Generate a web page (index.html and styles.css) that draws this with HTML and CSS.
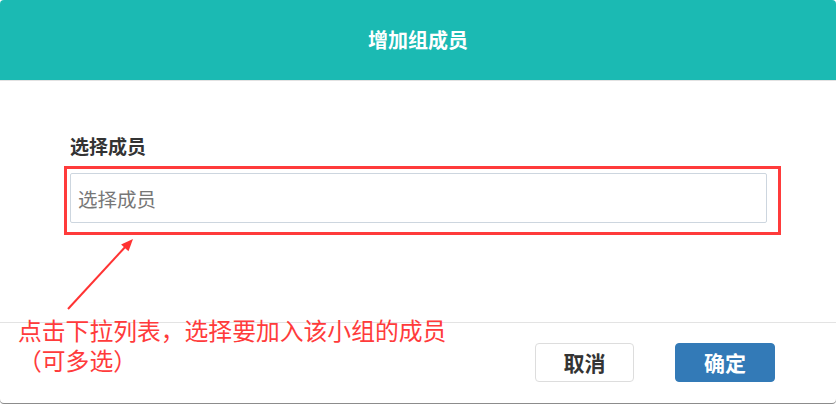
FILE: index.html
```html
<!DOCTYPE html>
<html lang="zh-CN">
<head>
<meta charset="utf-8">
<title>增加组成员</title>
<link rel="stylesheet" href="styles.css">
</head>
<body>
<div class="modal">
  <div class="modal-header">
    <h3 class="modal-title">增加组成员</h3>
  </div>
  <div class="modal-body">
    <label class="field-label">选择成员</label>
    <div class="field">
      <input class="select-input" type="text" placeholder="选择成员">
      <div class="mark-box"></div>
    </div>
  </div>
  <div class="modal-footer">
    <button class="btn btn-default">取消</button>
    <button class="btn btn-primary">确定</button>
  </div>
  <svg class="mark-arrow" width="836" height="404" viewBox="0 0 836 404">
    <line x1="68" y1="309" x2="127" y2="245" stroke="#f33" stroke-width="2"/>
    <polygon points="133,239 128.5,251.2 121.1,244.4" fill="#f33"/>
  </svg>
  <div class="mark-note">
    <div class="note-line">点击下拉列表，选择要加入该小组的成员</div>
    <div class="note-line">（可多选）</div>
  </div>
</div>
</body>
</html>
```

FILE: styles.css
```css
html, body {
  margin: 0;
  padding: 0;
  background: #fff;
}
body {
  font-family: "Noto Sans CJK SC", "Liberation Sans", sans-serif;
}
.modal {
  position: relative;
  width: 836px;
  height: 404px;
  box-sizing: border-box;
  border-radius: 4px;
  overflow: hidden;
  background: #fff;
  box-shadow: inset 0 -1px 0 #8c8c8c;
  display: flex;
  flex-direction: column;
}
.modal-header {
  height: 80px;
  background: #1bbab3;
  border-bottom: 1px solid #e2e2e2;
  display: flex;
  align-items: center;
  justify-content: center;
  flex: none;
}
.modal-title {
  margin: 0;
  color: #fff;
  font-size: 20px;
  font-weight: 700;
  line-height: 28px;
}
.modal-body {
  flex: 1;
  padding: 52px 0 0 70px;
  box-sizing: border-box;
}
.field-label {
  display: block;
  font-size: 19px;
  font-weight: 700;
  color: #333;
  line-height: 26px;
  margin-bottom: 14px;
}
.field {
  position: relative;
  width: 697px;
}
.select-input {
  display: block;
  width: 697px;
  height: 50px;
  box-sizing: border-box;
  border: 1px solid #cdd6df;
  border-radius: 2px;
  padding: 0 0 0 7px;
  font-family: inherit;
  font-size: 19.5px;
  color: #555;
  outline: none;
}
.select-input::placeholder {
  color: #777;
}
.mark-box {
  position: absolute;
  left: -6px;
  top: -7px;
  width: 717px;
  height: 69px;
  box-sizing: border-box;
  border: 3px solid #ff3b3b;
  pointer-events: none;
}
.modal-footer {
  flex: none;
  height: 82px;
  box-sizing: border-box;
  border-top: 1px solid #e3e3e3;
  padding: 20px 61px 0 0;
  display: flex;
  justify-content: flex-end;
  align-items: flex-start;
  gap: 41px;
}
.btn {
  width: 100px;
  height: 39px;
  border-radius: 4px;
  font-family: inherit;
  font-size: 21px;
  font-weight: 700;
  line-height: 1;
  padding: 0;
  cursor: pointer;
}
.btn-default {
  width: 99px;
  background: #fff;
  border: 1px solid #ddd;
  color: #333;
}
.btn-primary {
  background: #337ab7;
  border: 1px solid #337ab7;
  color: #fff;
}
.mark-arrow {
  position: absolute;
  left: 0;
  top: 0;
  pointer-events: none;
}
.mark-note {
  position: absolute;
  left: 18px;
  top: 317px;
  font-family: "Liberation Sans", "Noto Sans CJK SC", sans-serif;
  font-size: 23.8px;
  color: #ff3b3b;
  white-space: nowrap;
}
.note-line {
  height: 30px;
  line-height: 30px;
}
```
